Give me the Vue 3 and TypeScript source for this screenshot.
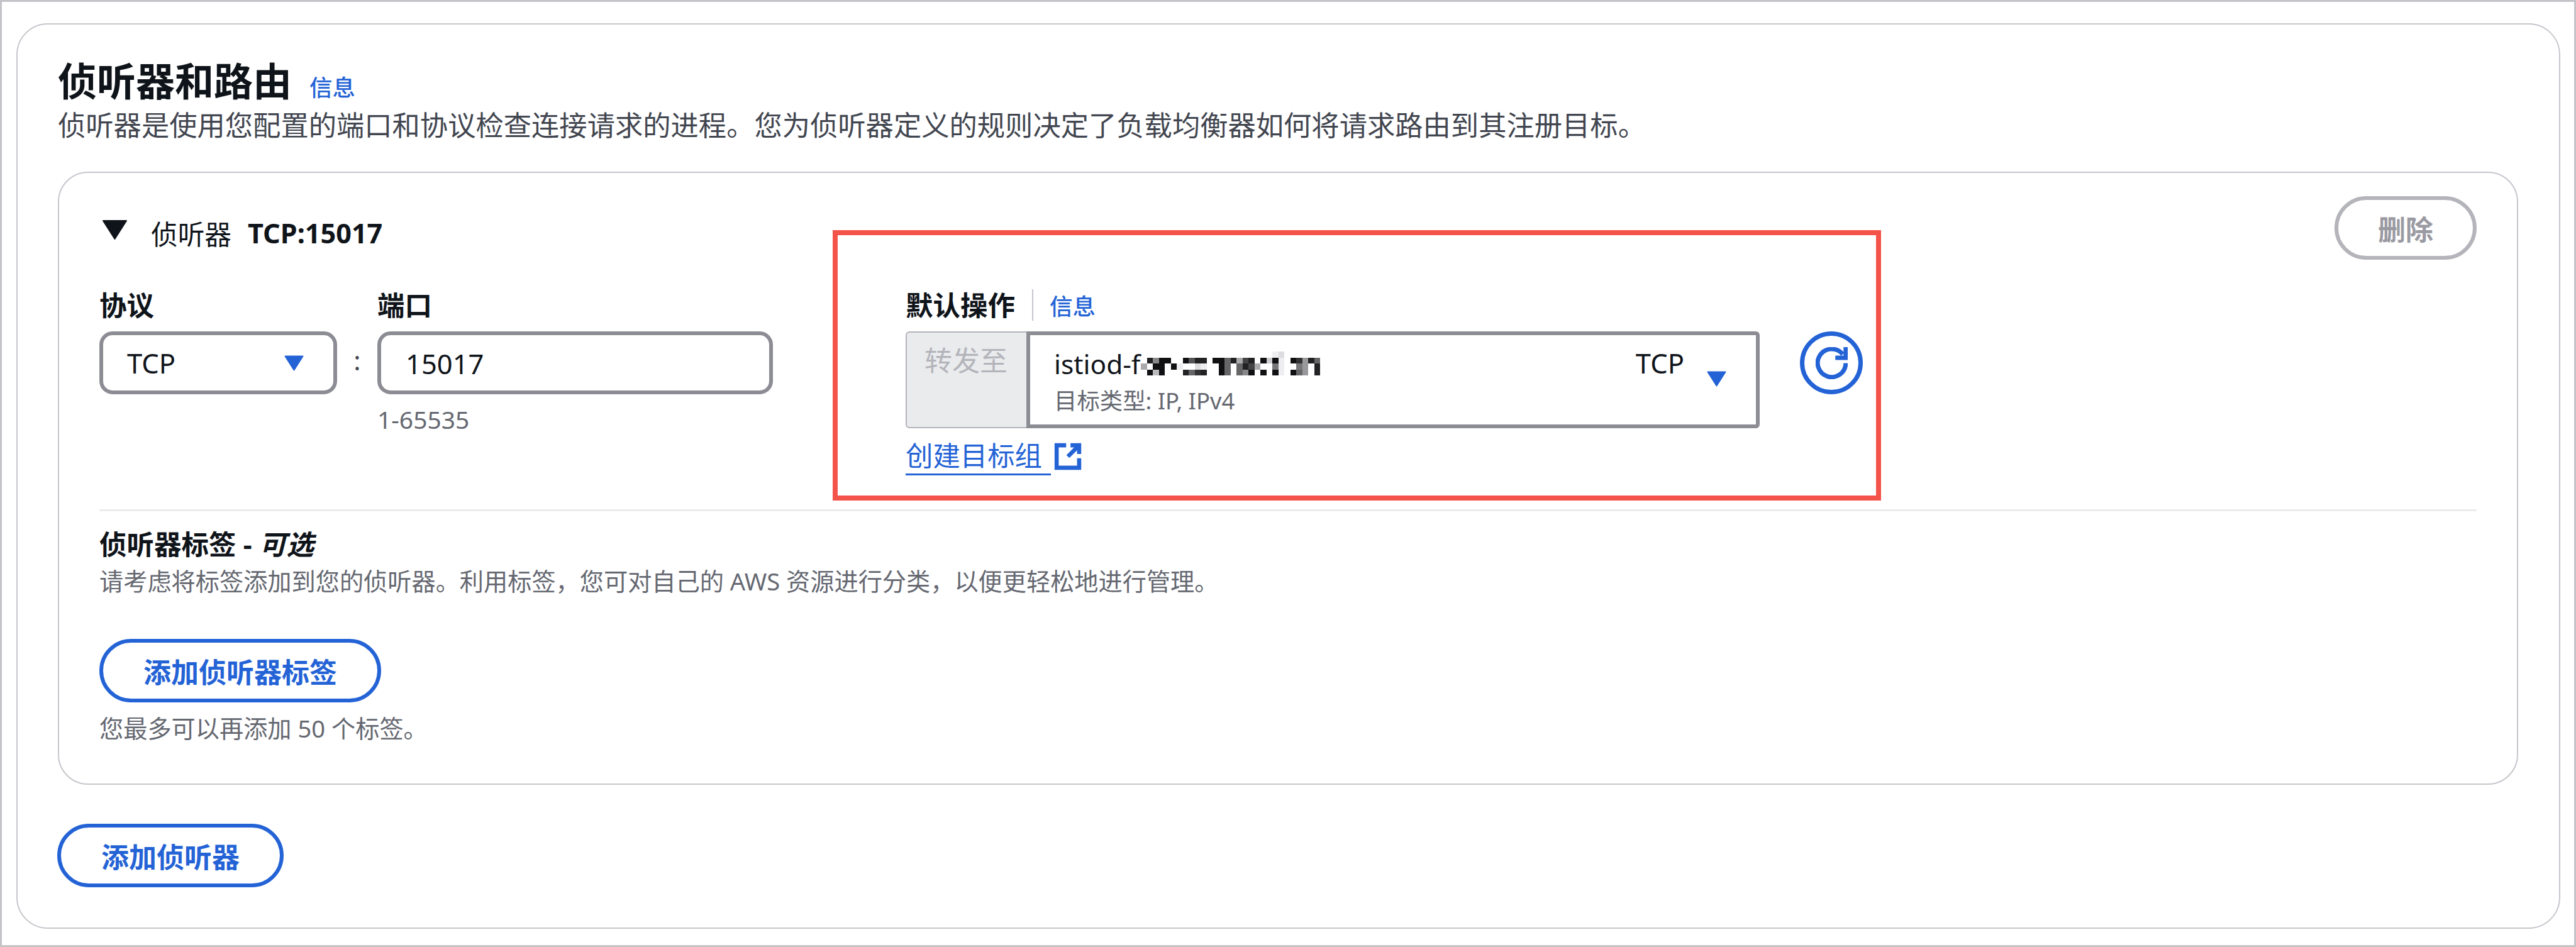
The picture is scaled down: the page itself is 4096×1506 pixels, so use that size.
<script setup lang="ts">
const mosaicRows: string[] = [
  '......................ed......',
  '.2811..1522.1162a42.1c1e.13926',
  'a.11.1e..de..16.624a..7e..79.2',
  '.1b1...2632..16.681.1.1e.169.2',
]

interface Cell { x: number; y: number; fill: string }

const cells: Cell[] = mosaicRows.flatMap((row, y) =>
  row.split('').flatMap((ch, x) => {
    if (ch === '.') return []
    const v = parseInt(ch, 16) * 17
    return [{ x, y, fill: `rgb(${v},${v},${v + 2})` }]
  }),
)
</script>

<template>
  <div class="frame">
    <section class="card">
      <header class="title-row">
        <h2 class="title">侦听器和路由</h2>
        <a class="info title-info">信息</a>
      </header>
      <p class="intro">侦听器是使用您配置的端口和协议检查连接请求的进程。您为侦听器定义的规则决定了负载均衡器如何将请求路由到其注册目标。</p>

      <div class="listener">
        <div class="head">
          <div class="head-left">
            <svg class="caret" viewBox="0 0 39 31"><path d="M1 1H38L19.5 30Z" fill="#0f141a" stroke="#0f141a" stroke-width="2" stroke-linejoin="round" /></svg>
            <span class="head-label">侦听器</span>
            <span class="head-value">TCP:15017</span>
          </div>
          <button class="pill disabled">删除</button>
        </div>

        <div class="fields">
          <div class="field proto">
            <label class="label">协议</label>
            <div class="input select">
              <span>TCP</span>
              <svg class="arrow" viewBox="0 0 31 25"><path d="M1.500 1.500H29.500L15.500 23.500Z" fill="#2463d6" stroke="#2463d6" stroke-width="2" stroke-linejoin="round" /></svg>
            </div>
          </div>
          <span class="colon">:</span>
          <div class="field port">
            <label class="label">端口</label>
            <div class="input port-input">15017</div>
            <div class="hint">1-65535</div>
          </div>

          <div class="field action">
            <div class="action-label">
              <label class="label">默认操作</label>
              <i class="sep"></i>
              <a class="info">信息</a>
            </div>
            <div class="group">
              <div class="prefix">转发至</div>
              <div class="target">
                <div class="target-text">
                  <div class="target-name">
                    <span>istiod-f</span>
                    <svg class="mosaic" viewBox="0 0 30 4" preserveAspectRatio="none" shape-rendering="crispEdges">
                      <rect v-for="c in cells" :key="`${c.x}-${c.y}`" :x="c.x" :y="c.y" width="1" height="1" :fill="c.fill" />
                    </svg>
                  </div>
                  <div class="target-type">目标类型: IP, IPv4</div>
                </div>
                <span class="target-proto">TCP</span>
                <svg class="arrow target-arrow" viewBox="0 0 31 25"><path d="M1.500 1.500H29.500L15.500 23.500Z" fill="#2463d6" stroke="#2463d6" stroke-width="2" stroke-linejoin="round" /></svg>
              </div>
            </div>
            <div class="create">
              <a class="create-link">创建目标组</a>
              <svg class="ext" viewBox="0 0 16 16" fill="none" stroke="#2463d6" stroke-width="2.400">
                <path d="M7 1.500H1.500V14.500H14.500V9" />
                <path d="M9.500 1.500H14.500V6.500M14.500 1.500L8 8" />
              </svg>
            </div>
          </div>

          <button class="refresh" aria-label="刷新">
            <svg viewBox="0 0 16 16" fill="none" stroke="#2463d6" stroke-width="2.200">
              <path d="M15 8A7 7 0 1 1 13.500 3.600" />
              <path d="M15 0V5.300H9.800" />
            </svg>
          </button>
        </div>

        <hr class="divider" />

        <div class="tags-title">侦听器标签 - <em>可选</em></div>
        <div class="tags-desc">请考虑将标签添加到您的侦听器。利用标签，您可对自己的 AWS 资源进行分类，以便更轻松地进行管理。</div>
        <button class="pill primary add-tag">添加侦听器标签</button>
        <div class="tags-note">您最多可以再添加 50 个标签。</div>
      </div>

      <button class="pill primary add-listener">添加侦听器</button>
    </section>

    <div class="highlight"></div>
  </div>
</template>

<style>
html, body {
  margin: 0;
  background: #fff;
  overflow: hidden;
}
</style>

<style scoped>
.frame {
  position: relative;
  box-sizing: border-box;
  width: 4096px;
  height: 1506px;
  padding: 34px 22px 26px 23px;
  border: 3px solid #c4c4c8;
  background: #fff;
  color: #0f141a;
  font-family: "Noto Sans", "Noto Sans CJK SC", sans-serif;
}

.card {
  box-sizing: border-box;
  height: 1440px;
  padding: 0 65px 0 64px;
  border: 2px solid #c6c6cd;
  border-radius: 50px;
}

.title-row {
  display: flex;
  align-items: baseline;
  gap: 28px;
  height: 66px;
  margin-top: 57px;
  line-height: 66px;
}

.title {
  margin: 0;
  font-size: 62px;
  font-weight: 700;
}

.info {
  color: #2463d6;
  font-size: 36.500px;
  font-weight: 500;
}

.intro {
  margin: 10px 0 0;
  height: 54px;
  line-height: 54px;
  font-size: 44.300px;
  color: #424650;
  white-space: nowrap;
}

.listener {
  box-sizing: border-box;
  height: 975px;
  margin-top: 47px;
  padding: 37px 64px 0;
  border: 2px solid #c6c6cd;
  border-radius: 48px;
}

.head {
  display: flex;
  justify-content: space-between;
  align-items: flex-start;
  height: 101px;
}

.head-left {
  display: flex;
  align-items: center;
  height: 60px;
  margin: 28px 0 0 5px;
}

.caret {
  width: 39px;
  height: 31px;
  margin: -9px 38px 0 0;
}

.head-label {
  font-size: 42.700px;
}

.head-value {
  margin-left: 26px;
  font-size: 43.200px;
  font-weight: 700;
}

.pill {
  box-sizing: border-box;
  height: 101px;
  padding: 0;
  background: #fff;
  border: 6px solid #2463d6;
  border-radius: 51px;
  color: #2463d6;
  font-family: inherit;
  font-size: 44px;
  font-weight: 700;
}

.pill.disabled {
  width: 226px;
  border-color: #b4b4bb;
  color: #9a9aa2;
}

.fields {
  display: flex;
  align-items: flex-start;
  margin-top: 39px;
}

.field {
  display: flex;
  flex-direction: column;
}

.label {
  height: 60px;
  line-height: 66px;
  font-size: 43.500px;
  font-weight: 700;
}

.proto {
  width: 378px;
}

.input {
  box-sizing: border-box;
  height: 100px;
  margin-top: 15px;
  border: 6px solid #8c8c94;
  border-radius: 21px;
  font-size: 43.500px;
  line-height: 90px;
  background: #fff;
}

.select {
  display: flex;
  justify-content: space-between;
  align-items: center;
  padding: 0 47px 0 38px;
}

.arrow {
  display: block;
  width: 31px;
  height: 25px;
}

.colon {
  width: 64px;
  margin-top: 96px;
  text-align: center;
  line-height: 50px;
  font-size: 42px;
  color: #424650;
}

.port {
  width: 629px;
}

.port-input {
  padding-left: 39px;
}

.hint {
  height: 50px;
  margin-top: 15px;
  line-height: 50px;
  font-size: 39px;
  color: #656871;
}

.action {
  width: 1358px;
  margin-left: 211px;
}

.action-label {
  display: flex;
  align-items: center;
  height: 60px;
}

.sep {
  width: 2px;
  height: 50px;
  margin: 6px 26px 0 27px;
  background: #c6c6cd;
}

.action-label .info {
  padding-top: 6px;
}

.group {
  display: flex;
  height: 154px;
  margin-top: 15px;
}

.prefix {
  box-sizing: border-box;
  width: 192px;
  padding: 16px 0 0 28px;
  background: #e9ebed;
  border: 2px solid #b4b4bb;
  border-right: 0;
  border-radius: 6px 0 0 6px;
  color: #b4b4bb;
  font-size: 44px;
  line-height: 56px;
}

.target {
  box-sizing: border-box;
  flex: 1;
  display: flex;
  align-items: flex-start;
  padding: 0 47px 0 38px;
  border: 6px solid #8c8c94;
  border-radius: 0 6px 6px 0;
}

.target-text {
  flex: 1;
}

.target-name {
  display: flex;
  align-items: center;
  height: 50px;
  margin-top: 20px;
  font-size: 42.400px;
}

.mosaic {
  width: 285px;
  height: 38px;
  margin-left: 1px;
}

.target-type {
  height: 44px;
  margin-top: 12px;
  line-height: 44px;
  font-size: 36.400px;
  color: #656871;
}

.target-proto {
  height: 50px;
  margin-top: 19px;
  line-height: 50px;
  font-size: 43.500px;
}

.target-arrow {
  margin: 57px 0 0 36px;
}

.create {
  display: flex;
  align-items: flex-start;
  margin-top: 18px;
}

.create-link {
  box-sizing: border-box;
  height: 57px;
  padding-right: 14px;
  line-height: 52px;
  font-size: 43.400px;
  color: #2463d6;
  border-bottom: 3px solid #2463d6;
}

.ext {
  width: 44px;
  height: 44px;
  margin: 5px 0 0 5px;
}

.refresh {
  display: flex;
  align-items: center;
  justify-content: center;
  box-sizing: border-box;
  width: 100px;
  height: 100px;
  margin: 75px 0 0 64px;
  padding: 0;
  background: #fff;
  border: 7px solid #2463d6;
  border-radius: 50%;
}

.refresh svg {
  width: 51px;
  height: 51px;
}

.divider {
  height: 3px;
  margin: 54px 0 0;
  border: 0;
  background: #e9ebed;
}

.tags-title {
  height: 60px;
  margin-top: 22px;
  line-height: 60px;
  font-size: 43.500px;
  font-weight: 700;
}

.tags-desc,
.tags-note {
  height: 50px;
  line-height: 50px;
  font-size: 38.200px;
  color: #656871;
  white-space: nowrap;
}

.tags-desc {
  margin-top: 4px;
}

.add-tag {
  display: block;
  width: 448px;
  margin-top: 67px;
}

.tags-note {
  margin-top: 16px;
}

.add-listener {
  display: block;
  width: 360px;
  margin: 62px 0 0 -1px;
}

.highlight {
  position: absolute;
  left: 1321px;
  top: 363px;
  box-sizing: border-box;
  width: 1667px;
  height: 430px;
  border: 8px solid #f4534a;
  pointer-events: none;
}
</style>
